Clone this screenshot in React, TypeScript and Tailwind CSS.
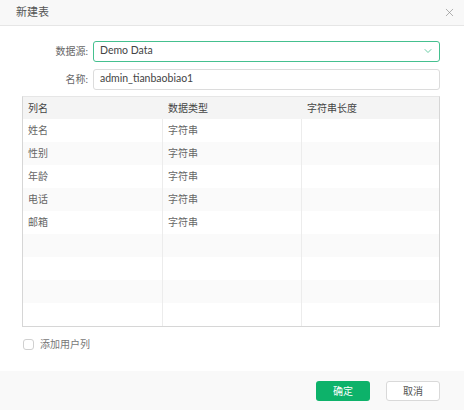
import { ChevronDown, X } from "lucide-react";

const rows: [string, string][] = [
  ["姓名", "字符串"],
  ["性别", "字符串"],
  ["年龄", "字符串"],
  ["电话", "字符串"],
  ["邮箱", "字符串"],
  ["", ""],
  ["", ""],
  ["", ""],
  ["", ""],
];

export default function App() {
  return (
    <div
      className="w-[464px] h-[410px] bg-white flex flex-col text-[10px] text-[#555]"
      style={{ fontFamily: 'Lato, "Noto Sans CJK SC", sans-serif' }}
    >
      {/* header */}
      <div className="h-[26px] shrink-0 flex items-center justify-between pl-4 pr-[8px] bg-[#f8f8f8] border-b border-[#e6e6e6]">
        <span className="text-[11px] text-[#555]">新建表</span>
        <X size={13} strokeWidth={1.2} className="text-[#888]" />
      </div>

      {/* body */}
      <div className="flex-1 flex flex-col pl-[22px] pr-[24px] pt-[15px]">
        <div className="flex items-center h-[20px]">
          <span className="w-[71px] text-right pr-[5px] text-[#666]">数据源:</span>
          <div className="flex-1 h-[21px] flex items-center justify-between rounded-[3px] border border-[#45c08f] pl-[6px] pr-[5px]">
            <span className="text-[10.5px] text-[#444]">Demo Data</span>
            <ChevronDown size={12} strokeWidth={1.6} className="text-[#45c08f]" />
          </div>
        </div>
        <div className="flex items-center h-[20px] mt-[8px]">
          <span className="w-[71px] text-right pr-[5px] text-[#666]">名称:</span>
          <div className="flex-1 h-[21px] flex items-center rounded-[3px] border border-[#dcdcdc] px-[6px]">
            <span className="text-[10.5px] text-[#444]">admin_tianbaobiao1</span>
          </div>
        </div>

        {/* table */}
        <div className="mt-[7px] border border-[#d6d6d6] border-t-[#e6e6e6]">
          <div className="grid grid-cols-[140px_139px_1fr] h-[22px] bg-[#f4f4f4] items-center">
            <span className="pl-[5px] text-[#444]">列名</span>
            <span className="pl-[5px] text-[#444]">数据类型</span>
            <span className="pl-[5px] text-[#444]">字符串长度</span>
          </div>
          {rows.map(([name, type], i) => (
            <div
              key={i}
              className={
                "grid grid-cols-[140px_139px_1fr] h-[23px] " +
                (i % 2 === 1 ? "bg-[#fafafa]" : "bg-white")
              }
            >
              <span className="pl-[5px] flex items-center border-r border-[#ececec] text-[#666]">{name}</span>
              <span className="pl-[5px] flex items-center border-r border-[#ececec] text-[#666]">{type}</span>
              <span></span>
            </div>
          ))}
        </div>

        <div className="flex items-center mt-[10px] pl-[1px]">
          <span className="w-[11px] h-[11px] rounded-[3px] border border-[#d0d0d0] bg-white"></span>
          <span className="ml-[6px] text-[#777]">添加用户列</span>
        </div>
      </div>

      {/* footer */}
      <div className="h-[39px] shrink-0 bg-[#f9f9f9] flex items-center justify-end gap-[16px] pr-[24px] pt-[1px]">
        <button className="w-[54px] h-[20px] rounded-[3px] bg-[#0db26a] text-white text-[10px]">确定</button>
        <button className="w-[54px] h-[20px] rounded-[3px] bg-white border border-[#d9d9d9] text-[#555] text-[10px]">取消</button>
      </div>
    </div>
  );
}
